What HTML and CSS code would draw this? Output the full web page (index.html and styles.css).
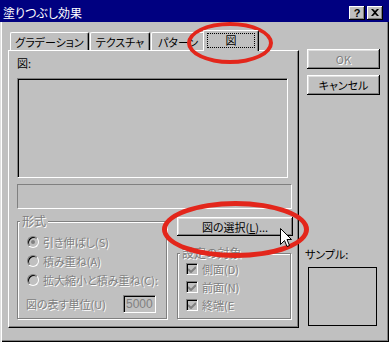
FILE: index.html
```html
<!DOCTYPE html>
<html lang="ja">
<head>
  <meta charset="utf-8">
  <title>塗りつぶし効果</title>
  <link rel="stylesheet" href="styles.css">
</head>
<body>
  <div class="window">
    <div class="titlebar">
      <span class="title">塗りつぶし効果</span>
      <div class="caption-btns">
        <span class="cbtn">?</span>
        <span class="cbtn">
          <svg width="8" height="7" viewBox="0 0 8 7"><path d="M0 0h2l2 2 2-2h2L5 3.5 8 7H6L4 5 2 7H0l3-3.5z" fill="#000"/></svg>
        </span>
      </div>
    </div>
    <div class="client">
      <div class="tabarea">
        <div class="tabs">
          <span class="tab t1">グラデーション</span>
          <span class="tab t2">テクスチャ</span>
          <span class="tab t3">パターン</span>
          <span class="tab active"><span class="focus">図</span></span>
        </div>
        <div class="panel">
          <div class="lbl">図:</div>
          <div class="picture"></div>
          <div class="field"></div>
          <div class="lower">
            <fieldset class="group format">
              <legend>形式</legend>
              <div class="opt"><span class="radio on"></span>引き伸ばし(S)</div>
              <div class="opt"><span class="radio"></span>積み重ね(A)</div>
              <div class="opt"><span class="radio"></span>拡大縮小と積み重ね(C):</div>
              <div class="unit">
                <span class="unit-lbl">図の表す単位(U)</span>
                <span class="num">5000</span>
              </div>
            </fieldset>
            <div class="rightcol">
              <button class="btn pick">図の選択(<u>L</u>)...</button>
              <fieldset class="group target">
                <legend>設定の対象</legend>
                <div class="chk"><span class="box"><svg width="8" height="7" viewBox="0 0 8 7"><path d="M0 3l3 3 5-5" fill="none" stroke="#808080" stroke-width="2"/></svg></span>側面(D)</div>
                <div class="chk"><span class="box"><svg width="8" height="7" viewBox="0 0 8 7"><path d="M0 3l3 3 5-5" fill="none" stroke="#808080" stroke-width="2"/></svg></span>前面(N)</div>
                <div class="chk"><span class="box"><svg width="8" height="7" viewBox="0 0 8 7"><path d="M0 3l3 3 5-5" fill="none" stroke="#808080" stroke-width="2"/></svg></span>終端(E</div>
              </fieldset>
            </div>
          </div>
        </div>
      </div>
      <div class="side">
        <button class="btn ok">OK</button>
        <button class="btn cancel">キャンセル</button>
        <div class="sample-lbl">サンプル:</div>
        <div class="sample"></div>
      </div>
    </div>
    <div class="ring ring-tab"></div>
    <div class="ring ring-btn"></div>
    <svg class="cursor" width="13" height="20" viewBox="0 0 13 20"><path d="M0.5 0.5V16.5L4.5 12.5L7 18.5L9.5 17.5L7 11.5H11.5Z" fill="#fff" stroke="#000"/></svg>
  </div>
</body>
</html>
```

FILE: styles.css
```css
html,
body {
  margin: 0;
  padding: 0;
}
body {
  background: #c0c0c0;
  font: 11px "Noto Sans CJK JP", "Liberation Sans", sans-serif;
  font-feature-settings: "palt";
  color: #000;
}
.window {
  position: relative;
  width: 389px;
  height: 342px;
  display: flex;
  flex-direction: column;
  background: #c0c0c0;
  overflow: hidden;
}
.titlebar {
  height: 22px;
  box-sizing: border-box;
  padding: 3px 6px 0 3px;
  display: flex;
  align-items: center;
  background: #000080;
  color: #fff;
}
.title {
  flex: 1;
  font-size: 12px;
  line-height: 14px;
}
.caption-btns {
  display: flex;
  gap: 2px;
}
.cbtn {
  width: 16px;
  height: 14px;
  box-sizing: border-box;
  display: flex;
  align-items: center;
  justify-content: center;
  background: #c0c0c0;
  color: #000;
  font: bold 11px "Liberation Sans", sans-serif;
  box-shadow: inset -1px -1px #000, inset 1px 1px #fff, inset -2px -2px #808080;
}
.client {
  flex: 1;
  display: flex;
  padding: 8px 0 14px 8px;
  box-shadow: inset 1px 0 #dfdfdf, inset 2px 0 #fff, inset -1px -1px #000, inset -2px -2px #808080;
}
.tabarea {
  width: 291px;
  display: flex;
  flex-direction: column;
}
.tabs {
  height: 20px;
  display: flex;
  align-items: flex-end;
  padding-left: 2px;
}
.tab {
  height: 18px;
  box-sizing: border-box;
  display: flex;
  align-items: center;
  justify-content: center;
  margin-right: 1px;
  border-top: 1px solid #fff;
  border-left: 1px solid #fff;
  border-right: 1px solid #000;
  border-radius: 2px 2px 0 0;
  box-shadow: inset -1px 0 #808080;
}
.t1 { width: 79px; }
.t2 { width: 60px; }
.t3 { width: 54px; }
.tab.active {
  position: relative;
  z-index: 1;
  width: 56px;
  height: 21px;
  margin-left: -3px;
  margin-bottom: -1px;
  padding-bottom: 2px;
  background: #c0c0c0;
}
.focus {
  width: 46px;
  height: 13px;
  display: flex;
  align-items: center;
  justify-content: center;
  outline: 1px dotted #000;
}
.panel {
  flex: 1;
  padding: 5px 0 0 8px;
  border-top: 1px solid #fff;
  border-left: 1px solid #fff;
  border-right: 1px solid #000;
  border-bottom: 1px solid #000;
  box-shadow: inset -1px -1px #808080;
}
.lbl {
  line-height: 14px;
}
.picture {
  width: 271px;
  height: 100px;
  margin-top: 8px;
  box-sizing: border-box;
  border-top: 1px solid #808080;
  border-left: 1px solid #808080;
  border-right: 1px solid #fff;
  border-bottom: 1px solid #fff;
  box-shadow: inset 1px 1px #000;
}
.field {
  width: 275px;
  height: 25px;
  margin-top: 6px;
  box-sizing: border-box;
  border-top: 1px solid #808080;
  border-left: 1px solid #808080;
  border-right: 1px solid #fff;
  border-bottom: 1px solid #fff;
}
.lower {
  display: flex;
  gap: 10px;
  height: 105px;
  margin-top: 5px;
}
.group {
  margin: 0;
  padding: 0;
  min-width: 0;
  box-sizing: border-box;
  border: 1px solid #808080;
  box-shadow: inset 1px 1px #fff, 1px 1px #fff;
  color: #808080;
  text-shadow: 1px 1px #fff;
}
.group legend {
  margin-left: 2px;
  padding: 0 2px;
  font-size: 12px;
  line-height: 14px;
  background: #c0c0c0;
}
.format {
  width: 150px;
  padding-top: 4px;
}
.opt {
  height: 19px;
  display: flex;
  align-items: center;
  gap: 4px;
  padding-left: 9px;
}
.radio {
  position: relative;
  width: 12px;
  height: 12px;
  box-sizing: border-box;
  border-radius: 50%;
  border: 1px solid;
  border-color: #808080 #fff #fff #808080;
  box-shadow: inset 1px 1px #000;
  background: #c0c0c0;
}
.radio.on::after {
  content: "";
  position: absolute;
  left: 3px;
  top: 3px;
  width: 4px;
  height: 4px;
  border-radius: 50%;
  background: #808080;
}
.unit {
  height: 18px;
  margin-top: 6px;
  display: flex;
  align-items: center;
  padding-left: 8px;
}
.unit-lbl {
  width: 97px;
}
.num {
  width: 33px;
  height: 18px;
  box-sizing: border-box;
  padding-left: 2px;
  font: 12px "Liberation Sans", sans-serif;
  line-height: 16px;
  border-top: 1px solid #808080;
  border-left: 1px solid #808080;
  border-right: 1px solid #fff;
  border-bottom: 1px solid #fff;
  box-shadow: inset 1px 1px #000;
  text-shadow: none;
}
.rightcol {
  width: 116px;
  display: flex;
  flex-direction: column;
}
.btn {
  margin: 0;
  padding: 0;
  border: none;
  background: #c0c0c0;
  font: inherit;
  color: #000;
  box-shadow: inset -1px -1px #000, inset 1px 1px #fff, inset -2px -2px #808080, inset 2px 2px #dfdfdf;
}
.pick {
  height: 19px;
  margin-top: 3px;
}
.target {
  flex: 1;
  width: 114px;
  margin-top: 10px;
}
.chk {
  height: 18px;
  display: flex;
  align-items: center;
  gap: 4px;
  padding-left: 8px;
}
.box {
  width: 12px;
  height: 12px;
  box-sizing: border-box;
  display: flex;
  align-items: center;
  justify-content: center;
  border: 1px solid;
  border-color: #808080 #fff #fff #808080;
  box-shadow: inset 1px 1px #000;
  background: #c0c0c0;
}
.side {
  width: 73px;
  margin-left: 8px;
  display: flex;
  flex-direction: column;
  padding-bottom: 2px;
}
.ok {
  height: 20px;
  margin-top: 19px;
  color: #808080;
  text-shadow: 1px 1px #fff;
}
.cancel {
  height: 20px;
  margin-top: 6px;
}
.sample-lbl {
  margin-top: auto;
  line-height: 14px;
  margin-left: -2px;
}
.sample {
  width: 69px;
  height: 59px;
  margin-top: 6px;
  margin-left: 1px;
  box-sizing: border-box;
  border: 1px solid #000;
}
.ring {
  position: absolute;
  box-sizing: border-box;
  border-radius: 50%;
  border: 4px solid #e3261b;
}
.ring-tab {
  left: 187px;
  top: 22px;
  width: 86px;
  height: 42px;
}
.ring-btn {
  left: 162px;
  top: 201px;
  width: 147px;
  height: 57px;
  border-width: 5px;
}
.cursor {
  position: absolute;
  left: 280px;
  top: 228px;
}
```
